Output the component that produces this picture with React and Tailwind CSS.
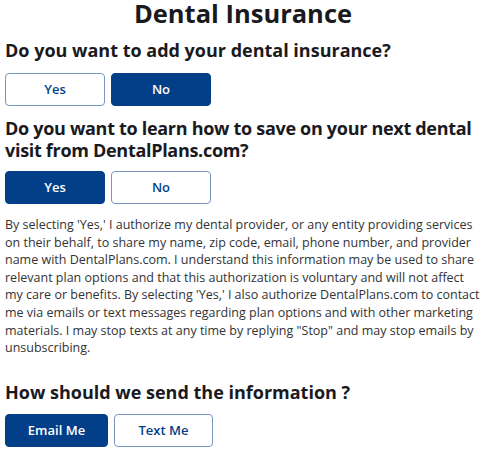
import React, { useState } from "react";

function Choice({ options, value, onChange, widths }) {
  return (
    <div className="flex gap-[6px]">
      {options.map((opt, i) => {
        const active = value === opt;
        return (
          <button
            key={opt}
            onClick={() => onChange(opt)}
            className={
              (widths[i] || "w-[100px]") +
              " h-[33px] rounded-[4px] text-[13px] font-semibold " +
              (active
                ? "bg-[#023f88] text-white border border-[#023f88]"
                : "bg-white text-[#023f88] border border-[#7896c2]")
            }
          >
            {opt}
          </button>
        );
      })}
    </div>
  );
}

export default function App() {
  const [hasInsurance, setHasInsurance] = useState("No");
  const [learn, setLearn] = useState("Yes");
  const [method, setMethod] = useState("Email Me");

  return (
    <div
      className="bg-white text-[#1a1a1e] px-[5px] w-[486px] h-[453px] overflow-hidden"
      style={{ fontFamily: '"Open Sans", "Noto Sans", sans-serif' }}
    >
      <h1 className="text-center text-[25.5px] font-bold leading-[26px]">Dental Insurance</h1>
      <h2 className="mt-[12px] text-[18px] font-bold leading-[24px]">Do you want to add your dental insurance?</h2>
      <div className="mt-[11px]">
        <Choice options={["Yes", "No"]} value={hasInsurance} onChange={setHasInsurance} widths={["w-[100px]", "w-[100px]"]} />
      </div>
      <h2 className="mt-[11px] text-[18px] font-bold leading-[22px] tracking-[-0.3px]">
        Do you want to learn how to save on your next dental
        <br />
        visit from DentalPlans.com?
      </h2>
      <div className="mt-[10px]">
        <Choice options={["Yes", "No"]} value={learn} onChange={setLearn} widths={["w-[100px]", "w-[100px]"]} />
      </div>
      <p className="mt-[12px] text-[12.5px] leading-[17.6px] text-[#333336]">
        By selecting 'Yes,' I authorize my dental provider, or any entity providing services
        <br />
        on their behalf, to share my name, zip code, email, phone number, and provider
        <br />
        name with DentalPlans.com. I understand this information may be used to share
        <br />
        relevant plan options and that this authorization is voluntary and will not affect
        <br />
        my care or benefits. By selecting 'Yes,' I also authorize DentalPlans.com to contact
        <br />
        me via emails or text messages regarding plan options and with other marketing
        <br />
        materials. I may stop texts at any time by replying "Stop" and may stop emails by
        <br />
        unsubscribing.
      </p>
      <h2 className="mt-[23px] text-[18px] font-bold leading-[24px]">How should we send the information ?</h2>
      <div className="mt-[10px]">
        <Choice options={["Email Me", "Text Me"]} value={method} onChange={setMethod} widths={["w-[103px]", "w-[99px]"]} />
      </div>
    </div>
  );
}
